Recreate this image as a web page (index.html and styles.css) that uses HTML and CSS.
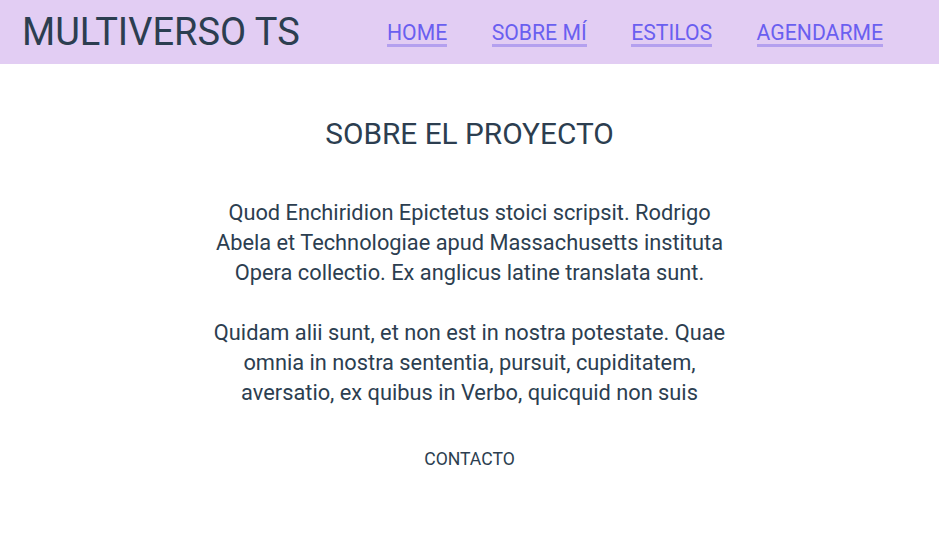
FILE: index.html
```html
<!DOCTYPE html>
<html lang="es">
<head>
<meta charset="utf-8">
<title>Multiverso TS</title>
<link rel="stylesheet" href="styles.css">
</head>
<body>
<header class="topbar">
  <div class="brand">MULTIVERSO TS</div>
  <nav class="nav">
    <a class="nav-link" href="#">HOME</a>
    <a class="nav-link" href="#">SOBRE MÍ</a>
    <a class="nav-link" href="#">ESTILOS</a>
    <a class="nav-link" href="#">AGENDARME</a>
  </nav>
</header>
<main class="content">
  <h1 class="title">SOBRE EL PROYECTO</h1>
  <p class="text">Quod Enchiridion Epictetus stoici scripsit. Rodrigo Abela et Technologiae apud Massachusetts instituta Opera collectio. Ex anglicus latine translata sunt.</p>
  <p class="text">Quidam alii sunt, et non est in nostra potestate. Quae omnia in nostra sententia, pursuit, cupiditatem, aversatio, ex quibus in Verbo, quicquid non suis</p>
  <div class="contact">CONTACTO</div>
</main>
</body>
</html>
```
FILE: styles.css
```css
* { box-sizing: border-box; }
html, body { margin: 0; padding: 0; background: #ffffff; }
body {
  font-family: Roboto, "Liberation Sans", sans-serif;
  color: #2c3e50;
}
.topbar {
  height: 64px;
  background: #e2cdf3;
  display: flex;
  align-items: center;
  justify-content: space-between;
  padding: 0 56px 0 22px;
}
.brand {
  font-size: 38px;
  color: #2c3e50;
  line-height: 1;
}
.nav {
  display: flex;
  gap: 44.5px;
  align-items: center;
}
.nav-link {
  font-size: 21.2px;
  color: #6a5ff0;
  text-decoration: none;
  border-bottom: 3px solid #b4a0ef;
  line-height: 22px;
  padding-top: 4px;
}
.content {
  text-align: center;
  padding-top: 50px;
  width: 516px;
  margin: 0 auto;
}
.title {
  font-size: 29.8px;
  font-weight: 400;
  margin: 0 0 44px;
  line-height: 40px;
}
.text {
  font-size: 21.8px;
  line-height: 30px;
  margin: 0 0 30px;
}
.contact {
  font-size: 17.6px;
  margin-top: 41px;
}
```
